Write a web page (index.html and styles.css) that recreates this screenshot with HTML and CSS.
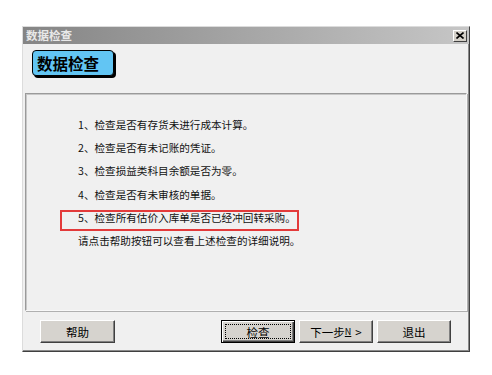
FILE: index.html
```html
<!DOCTYPE html>
<html lang="zh-CN">
<head>
<meta charset="utf-8">
<title>数据检查</title>
<link rel="stylesheet" href="styles.css">
</head>
<body>
<div class="window">
  <div class="titlebar">
    <span class="title-text">数据检查</span>
    <span class="close-btn">
      <svg width="8" height="7" viewBox="0 0 8 7"><path d="M0.5 0.5 L7.5 6.5 M7.5 0.5 L0.5 6.5" stroke="#000" stroke-width="1.6"/></svg>
    </span>
  </div>
  <div class="content">
    <div class="badge">数据检查</div>
    <div class="panel">
      <ol class="checks">
        <li>1、检查是否有存货未进行成本计算。</li>
        <li>2、检查是否有未记账的凭证。</li>
        <li>3、检查损益类科目余额是否为零。</li>
        <li>4、检查是否有未审核的单据。</li>
        <li>5、检查所有估价入库单是否已经冲回转采购。</li>
        <li>请点击帮助按钮可以查看上述检查的详细说明。</li>
      </ol>
      <div class="highlight"></div>
    </div>
    <div class="buttons">
      <button class="btn help">帮助</button>
      <div class="right-btns">
        <button class="btn focused"><span class="focus-ring">检查</span></button>
        <button class="btn">下一步<u>N</u><span class="arrow">&gt;</span></button>
        <button class="btn">退出</button>
      </div>
    </div>
  </div>
</div>
</body>
</html>
```

FILE: styles.css
```css
html, body {
  margin: 0;
  padding: 0;
  background: #ffffff;
}
body {
  font-family: "Noto Sans CJK SC", "Liberation Sans", sans-serif;
  color: #000;
}
.window {
  box-sizing: border-box;
  margin: 26px 0 0 22px;
  width: 448px;
  height: 326px;
  background: #f0f0f0;
  border: 1px solid;
  border-color: #dcdcdc #404040 #404040 #dcdcdc;
  box-shadow: inset -1px -1px 0 #8a8a8a;
  display: flex;
  flex-direction: column;
}
.titlebar {
  height: 17px;
  background: linear-gradient(to right, #858585, #c6c6c6);
  display: flex;
  align-items: center;
  justify-content: space-between;
  padding: 0 2px 0 3px;
}
.title-text {
  color: #e8e8e8;
  font-size: 11.5px;
  font-weight: bold;
  line-height: 17px;
}
.close-btn {
  box-sizing: border-box;
  width: 14px;
  height: 12px;
  background: #d4d0c8;
  border: 1px solid;
  border-color: #ffffff #404040 #404040 #ffffff;
  display: flex;
  align-items: center;
  justify-content: center;
}
.content {
  flex: 1;
  display: flex;
  flex-direction: column;
  padding: 6px 2px 0 2px;
}
.badge {
  box-sizing: border-box;
  align-self: flex-start;
  margin-left: 7px;
  width: 82px;
  height: 26px;
  background: #62c5f3;
  border: 1px solid #000;
  border-radius: 4px;
  box-shadow: 2px 2px 0 #000;
  font-size: 15.5px;
  font-weight: bold;
  line-height: 24px;
  padding-left: 4px;
}
.panel {
  position: relative;
  box-sizing: border-box;
  margin-top: 17px;
  height: 218px;
  border: 1px solid;
  border-color: #9a9a9a #f8f8f8 #f8f8f8 #9a9a9a;
  box-shadow: inset 1px 1px 0 #c8c8c8, 1px 1px 0 #b0b0b0;
  background: #f0f0f0;
}
.checks {
  list-style: none;
  margin: 0;
  padding: 19px 0 0 52px;
  font-size: 10.6px;
  line-height: 23.2px;
  color: #111;
}
.highlight {
  position: absolute;
  left: 34px;
  top: 116px;
  width: 239px;
  height: 21px;
  box-sizing: border-box;
  border: 2px solid #e33a3a;
}
.buttons {
  display: flex;
  margin-top: 9px;
  padding: 0 16px 0 15px;
}
.right-btns {
  margin-left: auto;
  display: flex;
  gap: 4px;
}
.btn {
  box-sizing: border-box;
  width: 74px;
  height: 23px;
  padding: 0;
  background: #d6d3ce;
  border: 1px solid;
  border-color: #ffffff #404040 #404040 #ffffff;
  box-shadow: inset -1px -1px 0 #808080;
  font-family: "Noto Sans CJK SC", "Liberation Sans", sans-serif;
  font-size: 11.5px;
  color: #000;
  display: flex;
  align-items: center;
  justify-content: center;
}
.btn.help {
  width: 75px;
}
.btn u {
  font-size: 9px;
  text-decoration: underline;
}
.btn .arrow {
  margin-left: 4px;
}
.btn.focused {
  border: 1px solid #000;
  box-shadow: inset 1px 1px 0 #ffffff, inset -1px -1px 0 #404040, inset -2px -2px 0 #808080;
  padding: 3px;
}
.focus-ring {
  box-sizing: border-box;
  width: 100%;
  height: 100%;
  border: 1px dotted #000;
  display: flex;
  align-items: center;
  justify-content: center;
}
```
